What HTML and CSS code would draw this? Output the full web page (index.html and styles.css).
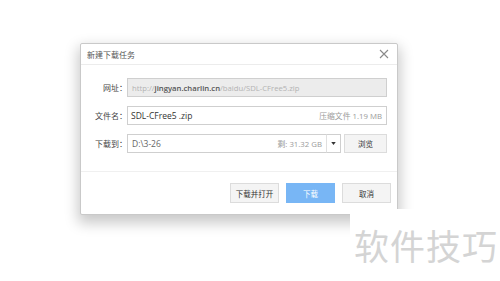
FILE: index.html
```html
<!DOCTYPE html>
<html lang="zh">
  <head>
    <meta charset="UTF-8">
    <title>新建下载任务</title>
    <link rel="stylesheet" href="styles.css">
  </head>
  <body>
    <div class="stage">
      <div class="dialog">
        <div class="titlebar">
          <span class="title">新建下载任务</span>
          <svg class="close" width="10" height="10" viewBox="0 0 10 10">
            <path d="M1 1L9 9M9 1L1 9" stroke="#8a8a8a" stroke-width="1.1" fill="none"/>
          </svg>
        </div>
        <div class="body">
          <div class="row">
            <span class="label">网址：</span>
            <div class="field url">http://<b>jingyan.charlin.cn</b>/baidu/SDL-CFree5.zip</div>
          </div>
          <div class="row">
            <span class="label">文件名：</span>
            <div class="field">
              <span class="name">SDL-CFree5 .zip</span>
              <span class="hint">压缩文件 1.19 MB</span>
            </div>
          </div>
          <div class="row">
            <span class="label">下载到：</span>
            <div class="field path">
              <span>D:\3-26</span>
              <span class="hint">剩: 31.32 GB</span>
            </div>
            <div class="drop">
              <svg width="5" height="3" viewBox="0 0 6 4"><path d="M0 0H6L3 4Z" fill="#333"/></svg>
            </div>
            <div class="btn browse">浏览</div>
          </div>
        </div>
        <div class="footer">
          <div class="btn">下载并打开</div>
          <div class="btn primary">下载</div>
          <div class="btn">取消</div>
        </div>
      </div>
      <div class="watermark">软件技巧</div>
    </div>
  </body>
</html>
```
FILE: styles.css
```css
body {
  margin: 0;
  background: #fff;
  font-family: 'Noto Sans CJK SC', 'Noto Sans', sans-serif;
  color: #333;
}

.stage {
  position: relative;
  width: 500px;
  height: 281px;
  overflow: hidden;
  padding: 43px 0 0 80px;
  box-sizing: border-box;
}

.dialog {
  width: 318px;
  height: 172px;
  box-sizing: border-box;
  background: #fff;
  border: 1px solid #c9c9c9;
  border-radius: 2px;
  box-shadow: 0 6px 14px 2px rgba(0, 0, 0, 0.22);
  display: flex;
  flex-direction: column;
}

.titlebar {
  height: 20px;
  display: flex;
  align-items: center;
  justify-content: space-between;
  padding: 0 8px 0 6px;
  border-bottom: 1px solid #ececec;
  flex-shrink: 0;
}

.title {
  font-size: 8px;
  color: #555;
}

.close {
  display: block;
}

.body {
  padding: 13px 10px 0 0;
  display: flex;
  flex-direction: column;
  gap: 9px;
  height: 107px;
  box-sizing: border-box;
  border-bottom: 1px solid #f0f0f0;
}

.row {
  display: flex;
  align-items: center;
  height: 19px;
}

.label {
  width: 46px;
  text-align: right;
  font-size: 8px;
  color: #444;
  flex-shrink: 0;
}

.field {
  flex: 1;
  height: 19px;
  box-sizing: border-box;
  border: 1px solid #cfcfcf;
  padding: 0 4px 0 3px;
  display: flex;
  align-items: center;
  justify-content: space-between;
  font-family: 'Open Sans', 'Noto Sans CJK SC', sans-serif;
  font-size: 8.5px;
  color: #333;
  background: #fff;
}

.field.url {
  background: #ececec;
  color: #b3b3b3;
  justify-content: flex-start;
  font-size: 7.7px;
  padding-left: 4px;
}

.field.url b {
  color: #555;
  font-weight: 600;
}

.hint {
  color: #9a9a9a;
  font-size: 7.8px;
}

.field.path {
  color: #666;
  padding-left: 4px;
}

.drop {
  width: 15px;
  height: 19px;
  box-sizing: border-box;
  border: 1px solid #cfcfcf;
  border-left: 1px solid #e0e0e0;
  margin-left: -1px;
  display: flex;
  align-items: center;
  justify-content: center;
  flex-shrink: 0;
}

.btn {
  width: 49px;
  height: 20px;
  box-sizing: border-box;
  border: 1px solid #dcdcdc;
  background: #f4f4f4;
  display: flex;
  align-items: center;
  justify-content: center;
  font-size: 7.5px;
  color: #333;
  flex-shrink: 0;
}

.btn.browse {
  width: 43px;
  height: 19px;
  margin-left: 3px;
}

.btn.primary {
  background: #78b6f5;
  border-color: #78b6f5;
  color: #fff;
}

.footer {
  flex: 1;
  display: flex;
  justify-content: flex-end;
  align-items: center;
  gap: 7px;
  padding: 0 6px 0 0;
}

.watermark {
  position: absolute;
  left: 350px;
  top: 209px;
  width: 150px;
  height: 72px;
  background: #fff;
  color: #d4d4d4;
  font-size: 35px;
  line-height: 1;
  padding: 18px 0 0 4px;
  box-sizing: border-box;
  letter-spacing: 1px;
}
```
